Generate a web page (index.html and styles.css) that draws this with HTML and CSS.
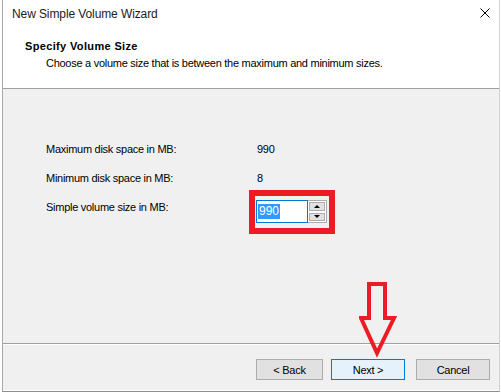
FILE: index.html
```html
<!DOCTYPE html>
<html lang="en">
<head>
    <meta charset="UTF-8">
    <title>New Simple Volume Wizard</title>
    <link rel="stylesheet" href="styles.css">
</head>
<body>

<div class="window">
    <div class="titlebar">
        <span class="title">New Simple Volume Wizard</span>
        <svg class="close" width="10" height="10" viewBox="0 0 10 10">
            <path d="M0.5 0.5 L9.5 9.5 M9.5 0.5 L0.5 9.5" stroke="#000" stroke-width="1" fill="none"/>
        </svg>
    </div>

    <!-- Page header -->
    <div class="header">
        <div class="heading">Specify Volume Size</div>
        <div class="subtitle">Choose a volume size that is between the maximum and minimum sizes.</div>
    </div>

    <!-- Size fields -->
    <div class="content">
        <div class="row">
            <span class="label">Maximum disk space in MB:</span>
            <span class="value">990</span>
        </div>
        <div class="row">
            <span class="label">Minimum disk space in MB:</span>
            <span class="value">8</span>
        </div>
        <div class="row">
            <span class="label">Simple volume size in MB:</span>
            <div class="highlight">
                <div class="spinbox">
                    <div class="spin-text"><span class="selected">990</span></div>
                    <div class="spin-buttons">
                        <div class="spin-btn"><span class="tri-up"></span></div>
                        <div class="spin-btn"><span class="tri-down"></span></div>
                    </div>
                </div>
            </div>
        </div>
    </div>

    <div class="footer">
        <button class="btn btn-back">&lt; Back</button>
        <button class="btn btn-next">Next &gt;</button>
        <button class="btn btn-cancel">Cancel</button>
    </div>

    <!-- annotation arrow pointing at Next -->
    <svg class="arrow" width="40" height="76" viewBox="0 0 40 76">
        <path d="M10 2 L26 2 L26 36 L35 36 L18 71 L2 36 L10 36 Z" fill="none" stroke="#ed1c24" stroke-width="4" stroke-linejoin="miter"/>
    </svg>
</div>

</body>
</html>
```

FILE: styles.css
```css
body { margin: 0; background: #fff; font-family: "Liberation Sans", Arial, sans-serif; font-size: 11px; letter-spacing: -0.27px; color: #000; overflow: hidden; }
.window { position: relative; margin-left: 2px; width: 496px; height: 391px; border-left: 1px solid #a9a9a9; border-right: 1px solid #d4d4d4; border-bottom: 1px solid #8c8c8c; display: flex; flex-direction: column; background: #fff; }
.titlebar { height: 30px; display: flex; align-items: flex-start; justify-content: space-between; padding: 6px 0 0 9px; box-sizing: border-box; }
.title { font-size: 12px; line-height: 16px; letter-spacing: -0.1px; color: #1b1b1b; }
.close { margin: 2px 9px 0 0; }
.header { height: 59px; padding: 10px 0 0 22px; box-sizing: border-box; border-bottom: 1px solid #a0a0a0; }
.heading { font-weight: bold; line-height: 13px; letter-spacing: 0.35px; }
.subtitle { line-height: 13px; margin: 4px 0 0 21px; }
.content { flex: 1; background: #f0f0f0; padding: 54px 0 0 43px; }
.row { display: flex; align-items: flex-start; height: 13px; line-height: 13px; margin-bottom: 16px; }
.label { width: 211px; }
.highlight { margin: -11px 0 0 -8px; border: 6px solid #ed1c24; padding: 4px 2px 5px 1px; background: #f0f0f0; }
.spinbox { display: flex; width: 71px; height: 23px; }
.spin-text { flex: 1; background: #fff; border: 1px solid #0078d7; display: flex; align-items: center; padding-left: 1px; }
.selected { background: #3399ff; color: #fff; font-size: 12px; line-height: 15px; letter-spacing: 0; padding: 0 1px; }
.spin-buttons { width: 18px; display: flex; flex-direction: column; border: 1px solid #adadad; border-left: none; background: #fff; }
.spin-btn { flex: 1; margin: 1px; background: #e1e1e1; border: 1px solid #adadad; display: flex; align-items: center; justify-content: center; }
.tri-up { width: 0; height: 0; border-left: 3px solid transparent; border-right: 3px solid transparent; border-bottom: 3px solid #000; }
.tri-down { width: 0; height: 0; border-left: 3px solid transparent; border-right: 3px solid transparent; border-top: 3px solid #000; }
.footer { height: 48px; box-sizing: border-box; background: #f0f0f0; border-top: 1px solid #a0a0a0; box-shadow: inset 0 1px #fff, inset 0 -1px #fff; display: flex; align-items: flex-start; padding: 15px 0 0 253px; }
.btn { height: 21px; font-family: "Liberation Sans", Arial, sans-serif; font-size: 11px; letter-spacing: -0.27px; color: #000; background: #e1e1e1; border: 1px solid #adadad; padding: 0; }
.btn-back { width: 67px; }
.btn-next { width: 74px; margin-left: 8px; background: #e5f1fb; border-color: #0078d7; }
.btn-cancel { width: 74px; margin-left: 11px; }
.arrow { position: absolute; left: 356px; top: 282px; }
```
